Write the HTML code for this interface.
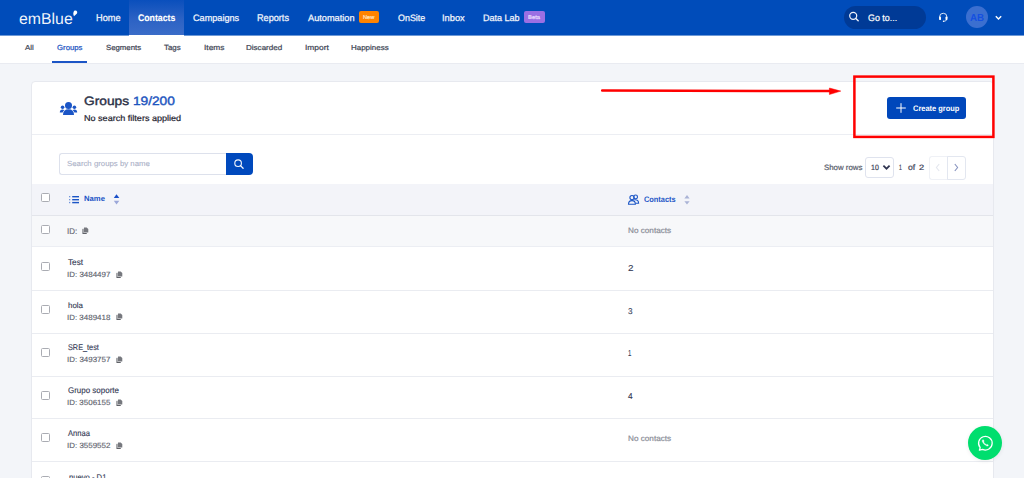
<!DOCTYPE html>
<html><head><meta charset="utf-8">
<style>
*{box-sizing:border-box;margin:0;padding:0}
html,body{width:1024px;height:478px;overflow:hidden;background:#f3f5f9;font-family:"Liberation Sans",sans-serif;text-rendering:geometricPrecision}
.b{position:absolute}
.t{position:absolute;white-space:nowrap;transform-origin:0 0;-webkit-text-stroke:0.2px currentColor}
</style></head><body>
<div class="b" style="left:0;top:0;width:1024px;height:35px;background:#004cba"></div>
<div class="b" style="left:0;top:35px;width:129px;height:1px;background:rgba(0,76,186,0.55)"></div>
<div class="b" style="left:184px;top:35px;width:840px;height:1px;background:rgba(0,76,186,0.55)"></div>
<div class="b" style="left:129px;top:0;width:55px;height:35px;background:linear-gradient(#0a4fbc,#2c62c4 55%,#3a6cc8)"></div>
<div id="t0" class="t" style="left:18.87px;top:7.75px;font-size:15.724px;line-height:24px;font-weight:400;color:rgba(255,255,255,0.95);transform:scaleX(1.0083);-webkit-text-stroke:0;">emBlue</div>
<svg class="b" style="left:72px;top:10px" width="6" height="7" viewBox="0 0 6 7"><path d="M3.4 0.6 C5 0.6 5.6 2.2 5 3.4 L2 6.2 C1.2 4.6 1.1 3.2 1.6 2 C2 1.1 2.6 0.6 3.4 0.6 Z" fill="#fff"/></svg>
<div id="t1" class="t" style="left:96.16px;top:10.63px;font-size:9.710px;line-height:15px;font-weight:400;color:#f2f5fc;transform:scaleX(0.9488);-webkit-text-stroke:0.25px currentColor;">Home</div>
<div id="t2" class="t" style="left:137.95px;top:12.18px;font-size:9.571px;line-height:14px;font-weight:700;color:#ffffff;transform:scaleX(0.9115);-webkit-text-stroke:0;-webkit-text-stroke:0.15px currentColor;">Contacts</div>
<div id="t3" class="t" style="left:192.84px;top:11.30px;font-size:9.241px;line-height:14px;font-weight:400;color:#f2f5fc;transform:scaleX(0.9875);-webkit-text-stroke:0.25px currentColor;">Campaigns</div>
<div id="t4" class="t" style="left:257.07px;top:10.63px;font-size:9.710px;line-height:15px;font-weight:400;color:#f2f5fc;transform:scaleX(0.9401);-webkit-text-stroke:0.25px currentColor;">Reports</div>
<div id="t5" class="t" style="left:307.70px;top:11.30px;font-size:9.241px;line-height:14px;font-weight:400;color:#f2f5fc;transform:scaleX(0.9965);-webkit-text-stroke:0.25px currentColor;">Automation</div>
<div id="t6" class="t" style="left:397.50px;top:11.30px;font-size:9.241px;line-height:14px;font-weight:400;color:#f2f5fc;transform:scaleX(0.9671);-webkit-text-stroke:0.25px currentColor;">OnSite</div>
<div id="t7" class="t" style="left:441.86px;top:11.30px;font-size:9.241px;line-height:14px;font-weight:400;color:#f2f5fc;transform:scaleX(1.0060);-webkit-text-stroke:0.25px currentColor;">Inbox</div>
<div id="t8" class="t" style="left:482.88px;top:11.30px;font-size:9.241px;line-height:14px;font-weight:400;color:#f2f5fc;transform:scaleX(0.9750);-webkit-text-stroke:0.25px currentColor;">Data Lab</div>
<div class="b" style="left:359px;top:11px;width:20px;height:12px;background:#ff8300;border-radius:2px"></div>
<div id="t9" class="t" style="left:362.85px;top:14.39px;font-size:5.507px;line-height:8px;font-weight:400;color:#ffe7c7;transform:scaleX(1.0282);">New</div>
<div class="b" style="left:524px;top:11px;width:21px;height:12px;background:#9b6fe3;border-radius:2px"></div>
<div id="t10" class="t" style="left:527.93px;top:13.79px;font-size:5.507px;line-height:8px;font-weight:400;color:#eadcff;transform:scaleX(1.0665);">Beta</div>
<div class="b" style="left:843.5px;top:6px;width:82px;height:22.8px;border-radius:11.5px;background:#003a96"></div>
<svg class="b" style="left:847px;top:10px" width="14" height="14" viewBox="0 0 14 14"><circle cx="6.2" cy="5.8" r="3.5" fill="none" stroke="#eef2fb" stroke-width="1.25"/><line x1="8.8" y1="8.4" x2="11.2" y2="10.8" stroke="#eef2fb" stroke-width="1.4" stroke-linecap="round"/></svg>
<div id="t11" class="t" style="left:868.46px;top:11.23px;font-size:9.429px;line-height:14px;font-weight:400;color:#ffffff;transform:scaleX(0.9439);">Go to...</div>
<svg class="b" style="left:937px;top:11px" width="13" height="13" viewBox="0 0 13 13"><path d="M2.6 7.6 V5.9 A3.65 3.65 0 0 1 9.9 5.9 V7.6" fill="none" stroke="#fff" stroke-width="0.85"/><rect x="2.1" y="5.5" width="1.9" height="3.6" rx="0.9" fill="#fff"/><rect x="8.5" y="5.5" width="1.9" height="3.6" rx="0.9" fill="#fff"/><path d="M9.6 8.8 Q9.3 10.2 6.6 10.3" fill="none" stroke="#fff" stroke-width="0.8"/><circle cx="6.5" cy="10.3" r="0.7" fill="#fff"/></svg>
<div class="b" style="left:966px;top:6px;width:22.4px;height:22.4px;border-radius:50%;background:#3b6fd0"></div>
<div id="t12" class="t" style="left:970.26px;top:10.68px;font-size:10.145px;line-height:15px;font-weight:700;color:#1450e0;transform:scaleX(0.9641);-webkit-text-stroke:0;">AB</div>
<svg class="b" style="left:994px;top:14px" width="9" height="7" viewBox="0 0 9 7"><path d="M1.8 2.2 L4.5 4.9 L7.2 2.2" fill="none" stroke="#fff" stroke-width="1.4"/></svg>
<div class="b" style="left:0;top:36px;width:1024px;height:27px;background:#fff"></div>
<div class="b" style="left:129px;top:35px;width:55px;height:1px;background:#fff"></div>
<div class="b" style="left:0;top:63px;width:1024px;height:1px;background:#e9ebf1"></div>
<div id="t13" class="t" style="left:24.60px;top:43.31px;font-size:7.172px;line-height:11px;font-weight:400;color:#434857;transform:scaleX(1.0940);-webkit-text-stroke:0.22px currentColor;">All</div>
<div id="t14" class="t" style="left:56.91px;top:42.22px;font-size:7.429px;line-height:11px;font-weight:400;color:#1f58c4;transform:scaleX(1.0491);-webkit-text-stroke:0.22px currentColor;">Groups</div>
<div id="t15" class="t" style="left:105.75px;top:42.22px;font-size:7.429px;line-height:11px;font-weight:400;color:#434857;transform:scaleX(1.0526);-webkit-text-stroke:0.22px currentColor;">Segments</div>
<div id="t16" class="t" style="left:164.14px;top:42.19px;font-size:7.536px;line-height:11px;font-weight:400;color:#434857;transform:scaleX(1.0525);-webkit-text-stroke:0.22px currentColor;">Tags</div>
<div id="t17" class="t" style="left:204.15px;top:42.19px;font-size:7.536px;line-height:11px;font-weight:400;color:#434857;transform:scaleX(1.1096);-webkit-text-stroke:0.22px currentColor;">Items</div>
<div id="t18" class="t" style="left:246.16px;top:43.31px;font-size:7.172px;line-height:11px;font-weight:400;color:#434857;transform:scaleX(1.1237);-webkit-text-stroke:0.22px currentColor;">Discarded</div>
<div id="t19" class="t" style="left:304.64px;top:42.19px;font-size:7.536px;line-height:11px;font-weight:400;color:#434857;transform:scaleX(1.1159);-webkit-text-stroke:0.22px currentColor;">Import</div>
<div id="t20" class="t" style="left:351.26px;top:43.31px;font-size:7.172px;line-height:11px;font-weight:400;color:#434857;transform:scaleX(1.1130);-webkit-text-stroke:0.22px currentColor;">Happiness</div>
<div class="b" style="left:52px;top:61px;width:35px;height:2px;background:#1b55c6"></div>
<div class="b" style="left:31px;top:81px;width:963px;height:420px;background:#fff;border:1px solid #e7e9ef;border-radius:4px"></div>
<svg class="b" style="left:58px;top:100px" width="20" height="17" viewBox="0 0 20 17"><g fill="#1b55c6">
<circle cx="10.5" cy="5.4" r="3.5"/><path d="M5 15 Q5 9.2 10.5 9.2 Q16 9.2 16 15 Z"/>
<circle cx="4.6" cy="7.2" r="1.8"/><circle cx="16.4" cy="7.2" r="1.8"/>
<path d="M1.8 12.6 Q1.8 9.6 4.6 9.6 Q5.6 9.6 6.2 10.2 Q4.9 11.4 4.6 12.6 Z"/><path d="M19.2 12.6 Q19.2 9.6 16.4 9.6 Q15.4 9.6 14.8 10.2 Q16.1 11.4 16.4 12.6 Z"/></g></svg>
<div id="t21" class="t" style="left:84.11px;top:92.49px;font-size:12.138px;line-height:18px;font-weight:400;color:#2b3147;transform:scaleX(1.1330);-webkit-text-stroke:0.4px currentColor;">Groups <span style="color:#1e56c0;-webkit-text-stroke:0.4px #1e56c0">19/200</span></div>
<div id="t22" class="t" style="left:84.07px;top:111.68px;font-size:8.414px;line-height:13px;font-weight:400;color:#1e2230;transform:scaleX(1.0773);">No search filters applied</div>
<div class="b" style="left:32px;top:134px;width:961px;height:1px;background:#eceef3"></div>
<div class="b" style="left:887px;top:97px;width:79px;height:22px;background:#0047bb;border-radius:3px"></div>
<svg class="b" style="left:895px;top:102px" width="12" height="12" viewBox="0 0 12 12"><path d="M6 1.2 V10.8 M1.2 6 H10.8" stroke="#fff" stroke-width="1"/></svg>
<div id="t23" class="t" style="left:912.50px;top:102.93px;font-size:8.000px;line-height:12px;font-weight:700;color:#ffffff;transform:scaleX(0.9304);-webkit-text-stroke:0;">Create group</div>
<div class="b" style="left:59px;top:153px;width:168px;height:21.5px;border:1px solid #dde1ec;border-right:none;border-radius:3px 0 0 3px;background:#fff"></div>
<div id="t24" class="t" style="left:66.55px;top:158.42px;font-size:7.448px;line-height:11px;font-weight:400;color:#abb1c7;transform:scaleX(1.0486);-webkit-text-stroke:0.1px currentColor;">Search groups by name</div>
<div class="b" style="left:226px;top:153px;width:27px;height:21.5px;background:#0049bd;border-radius:0 4px 4px 0"></div>
<svg class="b" style="left:232px;top:158px" width="14" height="12" viewBox="0 0 14 12"><circle cx="6.1" cy="5.2" r="3.3" fill="none" stroke="#f4f7fd" stroke-width="1.1"/><line x1="8.5" y1="7.6" x2="11.1" y2="10.2" stroke="#f4f7fd" stroke-width="1.3" stroke-linecap="round"/></svg>
<div id="t25" class="t" style="left:823.85px;top:162.02px;font-size:7.724px;line-height:12px;font-weight:400;color:#575c6b;transform:scaleX(1.0174);">Show rows</div>
<div class="b" style="left:865px;top:157px;width:29px;height:21px;border:1px solid #dfe3ee;border-radius:3px"></div>
<div id="t26" class="t" style="left:870.77px;top:162.38px;font-size:7.571px;line-height:11px;font-weight:400;color:#3d4257;transform:scaleX(0.9245);">10</div>
<svg class="b" style="left:882px;top:164px" width="9" height="7" viewBox="0 0 9 7"><path d="M1.4 1.6 L4.5 4.7 L7.6 1.6" fill="none" stroke="#2f3450" stroke-width="1.7"/></svg>
<div id="t27" class="t" style="left:899.12px;top:161.84px;font-size:7.681px;line-height:12px;font-weight:400;color:#3d4257;transform:scaleX(0.6584);">1</div>
<div id="t28" class="t" style="left:907.85px;top:161.68px;font-size:8.138px;line-height:12px;font-weight:400;color:#3d4257;transform:scaleX(1.0665);">of</div>
<div id="t29" class="t" style="left:918.94px;top:162.38px;font-size:7.571px;line-height:11px;font-weight:400;color:#3d4257;transform:scaleX(1.2192);">2</div>
<div class="b" style="left:929px;top:155.5px;width:19px;height:24px;border:1px solid #eff1f6;border-right:none;border-radius:3px 0 0 3px"></div>
<div class="b" style="left:947px;top:155.5px;width:19px;height:24px;border:1px solid #e3e7f0;border-radius:0 3px 3px 0"></div>
<svg class="b" style="left:934px;top:163px" width="8" height="9" viewBox="0 0 8 9"><path d="M5.2 1 L2.4 4.5 L5.2 8" fill="none" stroke="#e4e7ee" stroke-width="1.1"/></svg>
<svg class="b" style="left:952px;top:163px" width="8" height="9" viewBox="0 0 8 9"><path d="M2.8 1 L5.6 4.5 L2.8 8" fill="none" stroke="#8793bf" stroke-width="1.1"/></svg>
<div class="b" style="left:32px;top:184px;width:961px;height:31px;background:#f3f4f9"></div>
<div class="b" style="left:32px;top:215px;width:961px;height:1px;background:#e3e5eb"></div>
<div class="b" style="left:41px;top:193px;width:9px;height:9px;border:1px solid #aaacb3;border-radius:1.5px;background:#fff"></div>
<svg class="b" style="left:68px;top:195px" width="12" height="9" viewBox="0 0 12 9"><g fill="#1b55c6">
<rect x="1" y="1" width="1.3" height="1.3" fill-opacity="0.6"/><rect x="1" y="4" width="1.3" height="1.3" fill-opacity="0.6"/><rect x="1" y="6.9" width="1.3" height="1.3" fill-opacity="0.6"/>
<rect x="4.2" y="1" width="6.8" height="1.4"/><rect x="4.2" y="4" width="6.8" height="1.4"/><rect x="4.2" y="6.9" width="6.8" height="1.4"/></g></svg>
<div id="t30" class="t" style="left:84.00px;top:193.29px;font-size:7.536px;line-height:11px;font-weight:700;color:#1b55c6;transform:scaleX(1.0211);-webkit-text-stroke:0;">Name</div>
<svg class="b" style="left:113px;top:193px" width="7" height="13" viewBox="0 0 7 13"><path d="M0.8 4.9 L3.5 1.2 L6.3 4.9 Z" fill="#1a4fc8"/><path d="M0.8 7.8 L3.5 11.6 L6.3 7.8 Z" fill="#9ba7d9"/></svg>
<svg class="b" style="left:627px;top:194px" width="13" height="12" viewBox="0 0 13 12"><g fill="none" stroke="#1b55c6" stroke-width="1.1">
<circle cx="5" cy="3.6" r="2.1"/><circle cx="8.6" cy="2.9" r="1.9"/><path d="M1.5 10.3 Q1.5 6.6 5 6.6 Q8.4 6.6 8.4 10.3 Z"/><path d="M7.2 5.8 Q11.6 5.2 11.6 9.3 L8.6 9.3"/></g></svg>
<div id="t31" class="t" style="left:643.60px;top:193.83px;font-size:8.000px;line-height:12px;font-weight:700;color:#1b55c6;transform:scaleX(0.9237);-webkit-text-stroke:0;">Contacts</div>
<svg class="b" style="left:684px;top:194px" width="6" height="12" viewBox="0 0 6 12"><path d="M0.4 4.4 L3 1 L5.6 4.4 Z" fill="#aab3d6"/><path d="M0.4 7.2 L3 10.6 L5.6 7.2 Z" fill="#aab3d6"/></svg>
<div class="b" style="left:32px;top:216px;width:961px;height:31px;background:#f7f8fa"></div>
<div class="b" style="left:32px;top:246px;width:961px;height:1px;background:#eceef3"></div>
<div class="b" style="left:41px;top:225px;width:9px;height:9px;border:1px solid #aaacb3;border-radius:1.5px;background:#fff"></div>
<div id="t32" class="t" style="left:67.38px;top:225.29px;font-size:8.406px;line-height:13px;font-weight:400;color:#6c6f79;transform:scaleX(0.9561);">ID:</div>
<svg class="b" style="left:81.8px;top:227.2px" width="7.2" height="7.4" viewBox="0 0 8 8"><path d="M2.2 0.4 H5.2 L7 2.2 V5.6 Q7 6.1 6.5 6.1 H2.7 Q2.2 6.1 2.2 5.6 Z" fill="#76787e"/><path d="M0.9 1.9 H1.7 V6.2 Q1.7 6.7 2.2 6.7 H5.3 V7.4 Q5.3 7.8 4.9 7.8 H0.9 Q0.5 7.8 0.5 7.4 V2.3 Q0.5 1.9 0.9 1.9 Z" fill="#606268"/></svg>
<div id="t33" class="t" style="left:627.84px;top:224.69px;font-size:7.826px;line-height:12px;font-weight:400;color:#8c8f99;transform:scaleX(1.0465);">No contacts</div>
<div class="b" style="left:32px;top:290px;width:961px;height:1px;background:#eaecf1"></div>
<div class="b" style="left:41px;top:262.2px;width:9px;height:9px;border:1px solid #aaacb3;border-radius:1.5px;background:#fff"></div>
<div id="t34" class="t" style="left:68.23px;top:256.29px;font-size:8.406px;line-height:13px;font-weight:400;color:#323853;transform:scaleX(0.9820);-webkit-text-stroke:0.12px currentColor;">Test</div>
<div id="t35" class="t" style="left:67.16px;top:268.68px;font-size:7.571px;line-height:11px;font-weight:400;color:#62656f;transform:scaleX(1.0534);-webkit-text-stroke:0.15px currentColor;">ID: 3484497</div>
<svg class="b" style="left:116.2px;top:270.5px" width="7.2" height="7.4" viewBox="0 0 8 8"><path d="M2.2 0.4 H5.2 L7 2.2 V5.6 Q7 6.1 6.5 6.1 H2.7 Q2.2 6.1 2.2 5.6 Z" fill="#76787e"/><path d="M0.9 1.9 H1.7 V6.2 Q1.7 6.7 2.2 6.7 H5.3 V7.4 Q5.3 7.8 4.9 7.8 H0.9 Q0.5 7.8 0.5 7.4 V2.3 Q0.5 1.9 0.9 1.9 Z" fill="#606268"/></svg>
<div id="t36" class="t" style="left:627.61px;top:262.23px;font-size:8.571px;line-height:13px;font-weight:400;color:#343a55;transform:scaleX(1.1538);-webkit-text-stroke:0.1px currentColor;">2</div>
<div class="b" style="left:32px;top:333px;width:961px;height:1px;background:#eaecf1"></div>
<div class="b" style="left:41px;top:305.0px;width:9px;height:9px;border:1px solid #aaacb3;border-radius:1.5px;background:#fff"></div>
<div id="t37" class="t" style="left:67.85px;top:299.73px;font-size:8.000px;line-height:12px;font-weight:400;color:#323853;transform:scaleX(0.9890);-webkit-text-stroke:0.12px currentColor;">hola</div>
<div id="t38" class="t" style="left:67.16px;top:312.48px;font-size:7.571px;line-height:11px;font-weight:400;color:#62656f;transform:scaleX(1.0514);-webkit-text-stroke:0.15px currentColor;">ID: 3489418</div>
<svg class="b" style="left:116.2px;top:313.3px" width="7.2" height="7.4" viewBox="0 0 8 8"><path d="M2.2 0.4 H5.2 L7 2.2 V5.6 Q7 6.1 6.5 6.1 H2.7 Q2.2 6.1 2.2 5.6 Z" fill="#76787e"/><path d="M0.9 1.9 H1.7 V6.2 Q1.7 6.7 2.2 6.7 H5.3 V7.4 Q5.3 7.8 4.9 7.8 H0.9 Q0.5 7.8 0.5 7.4 V2.3 Q0.5 1.9 0.9 1.9 Z" fill="#606268"/></svg>
<div id="t39" class="t" style="left:627.87px;top:305.03px;font-size:8.571px;line-height:13px;font-weight:400;color:#343a55;transform:scaleX(0.9579);-webkit-text-stroke:0.1px currentColor;">3</div>
<div class="b" style="left:32px;top:376px;width:961px;height:1px;background:#eaecf1"></div>
<div class="b" style="left:41px;top:347.8px;width:9px;height:9px;border:1px solid #aaacb3;border-radius:1.5px;background:#fff"></div>
<div id="t40" class="t" style="left:68.07px;top:342.43px;font-size:8.286px;line-height:12px;font-weight:400;color:#323853;transform:scaleX(0.8827);-webkit-text-stroke:0.12px currentColor;">SRE_test</div>
<div id="t41" class="t" style="left:67.16px;top:354.28px;font-size:7.571px;line-height:11px;font-weight:400;color:#62656f;transform:scaleX(1.0534);-webkit-text-stroke:0.15px currentColor;">ID: 3493757</div>
<svg class="b" style="left:116.2px;top:356.1px" width="7.2" height="7.4" viewBox="0 0 8 8"><path d="M2.2 0.4 H5.2 L7 2.2 V5.6 Q7 6.1 6.5 6.1 H2.7 Q2.2 6.1 2.2 5.6 Z" fill="#76787e"/><path d="M0.9 1.9 H1.7 V6.2 Q1.7 6.7 2.2 6.7 H5.3 V7.4 Q5.3 7.8 4.9 7.8 H0.9 Q0.5 7.8 0.5 7.4 V2.3 Q0.5 1.9 0.9 1.9 Z" fill="#606268"/></svg>
<div id="t42" class="t" style="left:628.25px;top:346.79px;font-size:8.696px;line-height:13px;font-weight:400;color:#343a55;transform:scaleX(0.6874);-webkit-text-stroke:0.1px currentColor;">1</div>
<div class="b" style="left:32px;top:418px;width:961px;height:1px;background:#eaecf1"></div>
<div class="b" style="left:41px;top:390.6px;width:9px;height:9px;border:1px solid #aaacb3;border-radius:1.5px;background:#fff"></div>
<div id="t43" class="t" style="left:68.00px;top:385.23px;font-size:8.286px;line-height:12px;font-weight:400;color:#323853;transform:scaleX(0.9644);-webkit-text-stroke:0.12px currentColor;">Grupo soporte</div>
<div id="t44" class="t" style="left:67.16px;top:397.08px;font-size:7.571px;line-height:11px;font-weight:400;color:#62656f;transform:scaleX(1.0514);-webkit-text-stroke:0.15px currentColor;">ID: 3506155</div>
<svg class="b" style="left:116.2px;top:398.9px" width="7.2" height="7.4" viewBox="0 0 8 8"><path d="M2.2 0.4 H5.2 L7 2.2 V5.6 Q7 6.1 6.5 6.1 H2.7 Q2.2 6.1 2.2 5.6 Z" fill="#76787e"/><path d="M0.9 1.9 H1.7 V6.2 Q1.7 6.7 2.2 6.7 H5.3 V7.4 Q5.3 7.8 4.9 7.8 H0.9 Q0.5 7.8 0.5 7.4 V2.3 Q0.5 1.9 0.9 1.9 Z" fill="#606268"/></svg>
<div id="t45" class="t" style="left:627.93px;top:389.59px;font-size:8.696px;line-height:13px;font-weight:400;color:#343a55;transform:scaleX(0.9564);-webkit-text-stroke:0.1px currentColor;">4</div>
<div class="b" style="left:32px;top:461px;width:961px;height:1px;background:#eaecf1"></div>
<div class="b" style="left:41px;top:433.4px;width:9px;height:9px;border:1px solid #aaacb3;border-radius:1.5px;background:#fff"></div>
<div id="t46" class="t" style="left:68.40px;top:427.49px;font-size:8.406px;line-height:13px;font-weight:400;color:#323853;transform:scaleX(0.9015);-webkit-text-stroke:0.12px currentColor;">Annaa</div>
<div id="t47" class="t" style="left:67.16px;top:439.88px;font-size:7.571px;line-height:11px;font-weight:400;color:#62656f;transform:scaleX(1.0534);-webkit-text-stroke:0.15px currentColor;">ID: 3559552</div>
<svg class="b" style="left:116.2px;top:441.7px" width="7.2" height="7.4" viewBox="0 0 8 8"><path d="M2.2 0.4 H5.2 L7 2.2 V5.6 Q7 6.1 6.5 6.1 H2.7 Q2.2 6.1 2.2 5.6 Z" fill="#76787e"/><path d="M0.9 1.9 H1.7 V6.2 Q1.7 6.7 2.2 6.7 H5.3 V7.4 Q5.3 7.8 4.9 7.8 H0.9 Q0.5 7.8 0.5 7.4 V2.3 Q0.5 1.9 0.9 1.9 Z" fill="#606268"/></svg>
<div id="t48" class="t" style="left:627.84px;top:433.49px;font-size:7.826px;line-height:12px;font-weight:400;color:#8c8f99;transform:scaleX(1.0465);">No contacts</div>
<div class="b" style="left:32px;top:504px;width:961px;height:1px;background:#eaecf1"></div>
<div class="b" style="left:41px;top:476.2px;width:9px;height:9px;border:1px solid #aaacb3;border-radius:1.5px;background:#fff"></div>
<div id="t49" class="t" style="left:68.60px;top:471.29px;font-size:8.406px;line-height:13px;font-weight:400;color:#323853;transform:scaleX(0.9109);-webkit-text-stroke:0.12px currentColor;">nuevo - D1</div>
<div id="t50" class="t" style="left:67.63px;top:482.68px;font-size:7.571px;line-height:11px;font-weight:400;color:#62656f;transform:scaleX(1.0504);-webkit-text-stroke:0.15px currentColor;">ID: 3560000</div>
<svg class="b" style="left:116.2px;top:484.5px" width="7.2" height="7.4" viewBox="0 0 8 8"><path d="M2.2 0.4 H5.2 L7 2.2 V5.6 Q7 6.1 6.5 6.1 H2.7 Q2.2 6.1 2.2 5.6 Z" fill="#76787e"/><path d="M0.9 1.9 H1.7 V6.2 Q1.7 6.7 2.2 6.7 H5.3 V7.4 Q5.3 7.8 4.9 7.8 H0.9 Q0.5 7.8 0.5 7.4 V2.3 Q0.5 1.9 0.9 1.9 Z" fill="#606268"/></svg>
<div id="t51" class="t" style="left:628.25px;top:475.19px;font-size:8.696px;line-height:13px;font-weight:400;color:#343a55;transform:scaleX(0.6874);-webkit-text-stroke:0.1px currentColor;">1</div>
<div class="b" style="left:968px;top:425.6px;width:34px;height:34px;border-radius:50%;background:#00de6e;box-shadow:0 1px 4px rgba(0,0,0,0.08)"></div>
<svg class="b" style="left:976px;top:434px" width="18" height="18" viewBox="0 0 18 18"><path d="M4.2 13.6 A6.8 6.8 0 1 1 6.6 15.4 L3.4 16.2 Z" fill="none" stroke="#fff" stroke-width="1.3" stroke-linejoin="round"/><path stroke="#fff" stroke-width="0.4" d="M6.6 5.9 Q6 6.5 6.4 7.8 Q7.6 10.6 10.6 11.8 Q11.8 12.2 12.4 11.4 L11.6 10.4 L10.6 10.8 Q8.6 10 7.6 8 L8.1 7 L7.3 5.8 Z" fill="#fff"/></svg>
<svg class="b" style="left:0;top:0" width="1024" height="478" viewBox="0 0 1024 478">
<line x1="602.2" y1="90.6" x2="832" y2="91.1" stroke="#ff0000" stroke-width="2.5" stroke-linecap="round"/>
<path d="M829.4 88 L840.8 91.1 L829.4 94.5 Z" fill="#ff0000" stroke="#ff0000" stroke-width="0.5" stroke-linejoin="round"/>
<rect x="854.4" y="76.6" width="139" height="60.3" fill="none" stroke="#ff0000" stroke-width="2.5"/>
</svg>
</body></html>
